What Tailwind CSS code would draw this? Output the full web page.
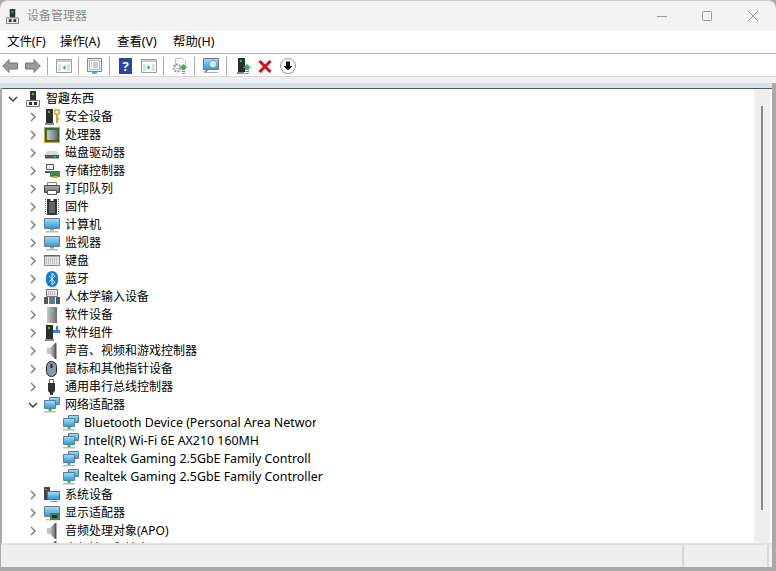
<!DOCTYPE html>
<html lang="zh-CN">
<head>
<meta charset="UTF-8">
<title>设备管理器</title>
<script src="https://cdn.jsdelivr.net/npm/@tailwindcss/browser@4"></script>
</head>
<body class="w-[776px] h-[571px] overflow-hidden bg-[#a9a9a9] font-['Noto_Sans','Noto_Sans_CJK_SC',sans-serif] text-[12px] text-black">
<svg class="absolute w-0 h-0">
  <defs>
    <linearGradient id="sky" x1="0" y1="0" x2="0" y2="1"><stop offset="0" stop-color="#a8def5"/><stop offset="1" stop-color="#2b97dc"/></linearGradient>
    <linearGradient id="metal" x1="0" y1="0" x2="1" y2="0"><stop offset="0" stop-color="#c9c9c9"/><stop offset="1" stop-color="#6f6f6f"/></linearGradient>
    <linearGradient id="gun" x1="0" y1="0" x2="0" y2="1"><stop offset="0" stop-color="#b0b0b0"/><stop offset="1" stop-color="#6a6a6a"/></linearGradient>
    <symbol id="pc" viewBox="0 0 14 16"><path fill="#333" d="M4 0h6v9H4z"/><path fill="#3c3" d="M6 2h2v2H6z"/><path fill="#ececec" stroke="#777" d="M.5 9.500h13v6H.5z"/><path fill="#333" d="M3 11h3v3H3zM8 11h3v3H8z"/></symbol>
    <symbol id="screen" viewBox="0 0 16 16"><path fill="url(#sky)" stroke="#6d7b86" d="M.5 1.500h15v10H.5z"/><path fill="#8a949c" d="M6 12h4v1.500H6z"/><path fill="#b8bec2" d="M2 14h12v1.500H2z"/></symbol>
    <symbol id="net" viewBox="0 0 16 16"><path fill="url(#sky)" stroke="#57809c" d="M5.500.5h10v7h-10z"/><path fill="url(#sky)" stroke="#57809c" d="M.5 3.500h11v8H.5z"/><path fill="#45b649" d="M4.500 12h3v2h-3z"/><path fill="#b4bcc0" d="M0 14h12v1.500H0z"/></symbol>
    <symbol id="spk" viewBox="0 0 16 16"><path fill="#c4c4c4" d="M3 5h3v6H3z"/><path fill="url(#metal)" d="M6 5l5-5v16l-5-5z"/><path fill="#555" d="M11 0h1.500v16H11z"/></symbol>
    <symbol id="tower" viewBox="0 0 16 16"><path fill="#2d2d2d" d="M2 0h7v14H2z"/><path fill="#3c3" d="M4 2h2v2H4z"/><path fill="#8a8a8a" d="M1 14h9v2H1z"/></symbol>
  </defs>
</svg>

<div class="flex flex-col w-[776px] h-[571px]">
  <!-- title bar -->
  <div class="h-[31px] bg-[#f3f3f3] border-t border-[#cfcfcf] flex items-center rounded-t-[8px] shrink-0">
    <svg class="ml-[6px] w-[13px] h-[15px]"><use href="#pc"/></svg>
    <span class="ml-[8px] text-[#8c8c8c]">设备管理器</span>
    <div class="ml-auto flex items-center">
      <svg class="w-[10px] h-[10px] mr-[35px]" viewBox="0 0 10 10"><path d="M0 5.500h10" stroke="#999"/></svg>
      <svg class="w-[10px] h-[10px] mr-[36px]" viewBox="0 0 10 10"><rect x=".5" y=".5" width="9" height="9" rx="1" fill="none" stroke="#999"/></svg>
      <svg class="w-[10px] h-[10px] mr-[18px]" viewBox="0 0 10 10"><path d="M0 0l10 10M10 0L0 10" stroke="#999"/></svg>
    </div>
  </div>

  <!-- menu -->
  <div class="h-[23px] bg-white flex items-center pl-[7px] border-b border-[#b4b4bc] shrink-0 text-[12.400px]">
    <span class="w-[53px]">文件(F)</span><span class="w-[57px]">操作(A)</span><span class="w-[56px]">查看(V)</span><span>帮助(H)</span>
  </div>

  <!-- toolbar -->
  <div class="h-[23px] bg-white pt-[2px] flex items-center border-b border-[#d8d8d8] shrink-0">
    <svg class="ml-[2px] w-[16px] h-[14px]" viewBox="0 0 16 14"><path d="M7 .5L.7 7 7 13.500V10h8.500V4H7z" fill="#9a9a9a" stroke="#777"/></svg>
    <svg class="ml-[7px] w-[16px] h-[14px]" viewBox="0 0 16 14"><path d="M9 .5L15.300 7 9 13.500V10H.5V4H9z" fill="#9a9a9a" stroke="#777"/></svg>
    <div class="ml-[6px] w-px h-[18px] bg-[#aaa]"></div>
    <svg class="ml-[8px] w-[16px] h-[14px]" viewBox="0 0 16 14"><path fill="#fff" stroke="#999" d="M.5.500h15v13H.5z"/><path fill="#ccc" d="M1 1h14v2H1z"/><path fill="#d5e2ee" d="M2 5h3v7H2zM11 5h3v7h-3z"/><path fill="#3aae3a" d="M9.500 6v5L6.500 8.500z"/></svg>
    <div class="ml-[6px] w-px h-[18px] bg-[#aaa]"></div>
    <svg class="ml-[8px] w-[15px] h-[16px]" viewBox="0 0 15 16"><path fill="#eee" stroke="#888" d="M.5.500h14v13H.5z"/><path fill="#fff" stroke="#abc" d="M2.500 2.500h10v9h-10z"/><path stroke="#89a" d="M6 5h5M6 7h5M6 9h5M4 5h1M4 7h1M4 9h1"/><path fill="#3fb4e8" d="M5 14h5v2H5z"/></svg>
    <div class="ml-[7px] w-px h-[18px] bg-[#aaa]"></div>
    <div class="ml-[9px] w-[13px] h-[16px] bg-[#27469f] text-white font-bold text-[13px] leading-[16px] text-center">?</div>
    <svg class="ml-[9px] w-[16px] h-[14px]" viewBox="0 0 16 14"><path fill="#fff" stroke="#999" d="M.5.500h15v13H.5z"/><path fill="#ccc" d="M1 1h14v2H1z"/><path fill="#d5e2ee" d="M2 5h3v7H2zM11 5h3v7h-3z"/><path fill="#3aae3a" d="M6.500 6v5l3-2.500z"/></svg>
    <div class="ml-[6px] w-px h-[18px] bg-[#aaa]"></div>
    <svg class="ml-[8px] w-[16px] h-[16px]" viewBox="0 0 16 16"><path fill="#f6f6f6" stroke="#c4c4c4" d="M3.500.500h7l3 3v7h-10z"/><circle cx="5" cy="10" r="3.500" fill="none" stroke="#999" stroke-width="2" stroke-dasharray="2 1"/><path fill="#2db84a" d="M11.500 6l4 4H13v2h-3v-2H7.500zM10 13h3v1h-3zM10 15h3v1h-3z"/></svg>
    <div class="ml-[6px] w-px h-[18px] bg-[#aaa]"></div>
    <svg class="ml-[8px] w-[16px] h-[16px]" viewBox="0 0 16 16"><path fill="url(#sky)" stroke="#5a7f99" d="M.5.500h15v11H.5z"/><circle cx="10" cy="6" r="3.800" fill="#cfeaf8" stroke="#8a9aa5"/><path d="M7 9l-5 5" stroke="#8a8a8a" stroke-width="2"/><path d="M1 14.500h14" stroke="#aab"/></svg>
    <div class="ml-[7px] w-px h-[18px] bg-[#aaa]"></div>
    <svg class="ml-[10px] w-[14px] h-[16px]" viewBox="0 0 14 16"><path fill="#2d2d2d" d="M1 0h7v14H1z"/><path fill="#3c3" d="M3 2h2v2H3z"/><path fill="#888" d="M0 14h7v2H0z"/><path fill="#2db84a" d="M10 6l4 4h-2v2H8v-2H6zM8 13h4v1H8zM8 15h4v1H8z"/></svg>
    <svg class="ml-[7px] w-[14px] h-[13px]" viewBox="0 0 14 13"><path d="M1.500 1l11 11M12.500 1l-11 11" stroke="#d4121a" stroke-width="3"/></svg>
    <svg class="ml-[8px] w-[16px] h-[16px]" viewBox="0 0 16 16"><circle cx="8" cy="8" r="7.500" fill="#fff" stroke="#999"/><path d="M6 3.500h4V8h2.500L8 12.500 3.500 8H6z" fill="#111"/></svg>
  </div>

  <div class="h-[6px] bg-[#f0f0f0] shrink-0"></div>

  <!-- light band above the tree -->
  <div class="h-[5px] w-[772px] bg-[#d4e1ea] shrink-0"></div>

  <!-- tree and scrollbar -->
  <div class="h-[455px] shrink-0 w-[770px] ml-[2px] flex flex-col border-t border-[#555] bg-white">
    <div class="flex-1 min-h-0 flex">
      <div id="tree" class="flex-1 min-w-0 overflow-hidden pt-px">
        <div class="h-[18px] flex items-center"><svg class="ml-[6px] w-[10px] h-[10px]" viewBox="0 0 10 10"><path d="M1 3l4 4 4-4" fill="none" stroke="#333" stroke-width="1.300"/></svg><svg class="ml-[8px] w-[14px] h-[16px]"><use href="#pc"/></svg><span class="ml-[6px]">智趣东西</span></div>
      </div>
      <div class="w-[16px] mr-[2px] bg-[#eeeeee] relative shrink-0"><div class="absolute left-[7px] top-[17px] w-[2px] h-[404px] bg-[#888]"></div></div>
    </div>
  </div>

  <!-- status bar -->
  <div class="h-[24px] w-[771px] ml-px shrink-0 bg-[#efefef] border-t-2 border-[#e2e2e2] flex">
    <div class="w-[683px] border-r-2 border-[#d8d8d8]"></div>
    <div class="w-[85px] border-r-2 border-[#d8d8d8]"></div>
  </div>
</div>
<script>
// tree rows: label + inline icon
var rows = [
  ['安全设备','<use href="#tower"/><circle cx="13" cy="3" r="2.500" fill="none" stroke="#d9a520" stroke-width="1.600"/><path fill="#d9a520" d="M12 5h2v9h-2zM14 9h1.500v1.500H14z"/>'],
  ['处理器','<path fill="#c9a23c" d="M0 0h16v16H0z"/><path fill="#2f6b3a" d="M1 1h14v14H1z"/><path fill="url(#metal)" d="M3 3h10v10H3z"/>'],
  ['磁盘驱动器','<path fill="#d8d8d8" d="M3 6h10l2 4H1z"/><path fill="#555" d="M1 10h14v3.500H1z"/><path fill="#3c3" d="M10 11h2v1.500h-2z"/>'],
  ['存储控制器','<path fill="#eee" stroke="#555" d="M2.500 1.500h7v5h-7z"/><path fill="#555" d="M1 8h7v2H1z"/><path fill="#3a8a4a" d="M6 8h10v6H6z"/><path fill="#d9a520" d="M8 13h6v2H8z"/>'],
  ['打印队列','<path fill="#f2f2f2" stroke="#888" d="M3.500 1.500h9v3h-9z"/><path fill="url(#gun)" stroke="#444" d="M.5 4.500h15v7H.5z"/><path fill="#fff" stroke="#555" d="M3.500 9.500h9v4h-9z"/>'],
  ['固件','<path fill="#333" d="M3 0h10v16H3z"/><path fill="#666" d="M5 3h6v11H5z"/><path fill="#fff" d="M6.500 0h3v2h-3z"/><path stroke="#666" stroke-dasharray="1 1" d="M1.500 0v16M14.500 0v16"/>'],
  ['计算机','<use href="#screen"/>'],
  ['监视器','<use href="#screen"/>'],
  ['键盘','<path fill="#e4e4e4" stroke="#8a8a8a" d="M.5 2.500h15v10H.5z"/><path fill="#666" d="M0 2h16v1.500H0z"/><path stroke="#a4a4a4" stroke-dasharray="1 1" d="M2 6h12M2 8h12M2 10h12"/>'],
  ['蓝牙','<rect x="2" y="0" width="12" height="16" rx="6" fill="#0a7be0"/><path d="M5 5l6 6-3 3V2l3 3-6 6" fill="none" stroke="#fff"/>'],
  ['人体学输入设备','<path fill="#e4e4e4" stroke="#777" d="M2.500 .5h11v7h-11z"/><path stroke="#999" stroke-dasharray="1 1" d="M4 3h8M4 5h8"/><path fill="#555" d="M0 8h4v7H0zM12 8h4v7h-4z"/><path fill="#5a7d9a" d="M5 8h6v7H5z"/>'],
  ['软件设备','<path fill="url(#metal)" d="M3 0h10v16H3z"/><path fill="#5cc" d="M6 3h3v2H6z"/>'],
  ['软件组件','<use href="#tower"/><path fill="#2f86d6" d="M9 5h3V1h2v4h2v3H9z"/>'],
  ['声音、视频和游戏控制器','<use href="#spk"/>'],
  ['鼠标和其他指针设备','<rect x="2.500" y=".5" width="10" height="15" rx="5" fill="#8a98a5" stroke="#222"/><path d="M7.500 3v4" stroke="#222" stroke-width="2"/>'],
  ['通用串行总线控制器','<path fill="#fff" stroke="#666" d="M5.500 .5h4v4h-4z"/><path fill="#333" d="M4 4h7v8l-2 2v2H6v-2l-2-2z"/>'],
  ['网络适配器','<use href="#net"/>',true,[
    ['Bluetooth Device (Personal Area Network','w-[232px]'],['Intel(R) Wi-Fi 6E AX210 160MH','w-auto'],['Realtek Gaming 2.5GbE Family Controll','w-auto'],['Realtek Gaming 2.5GbE Family Controller','w-auto']]],
  ['系统设备','<path fill="#444" d="M0 0h6v13H0z"/><path fill="#3c3" d="M1 2h2v1H1z"/><path fill="url(#sky)" stroke="#667" d="M3.500 4.500h12v8h-12z"/><path fill="#999" d="M6 14h8v1H6z"/>'],
  ['显示适配器','<use href="#screen"/><path fill="#3a8a4a" d="M6 8h10v7H6z"/><path fill="#222" d="M8 10h5v3H8z"/>'],
  ['音频处理对象(APO)','<use href="#spk"/>'],
  ['音频输入和输出','<use href="#spk"/>']
];
var out = '';
rows.forEach(function (r) {
  var chevron = r[2]
    ? '<path d="M1 3l4 4 4-4" fill="none" stroke="#333" stroke-width="1.300"/>'
    : '<path d="M3 1l4 4-4 4" fill="none" stroke="#808080" stroke-width="1.500"/>';
  out += '<div class="h-[18px] flex items-center"><svg class="ml-[26px] w-[10px] h-[10px]" viewBox="0 0 10 10">' + chevron + '</svg>'
    + '<svg class="ml-[6px] w-[16px] h-[16px]" viewBox="0 0 16 16">' + r[1] + '</svg><span class="ml-[5px] whitespace-nowrap">' + r[0] + '</span></div>';
  (r[3] || []).forEach(function (c) {
    out += '<div class="h-[18px] flex items-center"><svg class="ml-[61px] w-[16px] h-[16px]" viewBox="0 0 16 16"><use href="#net"/></svg><span class="ml-[5px] whitespace-nowrap overflow-hidden text-[12.400px] ' + c[1] + '">' + c[0] + '</span></div>';
  });
});
document.getElementById('tree').insertAdjacentHTML('beforeend', out);
</script>
</body>
</html>
